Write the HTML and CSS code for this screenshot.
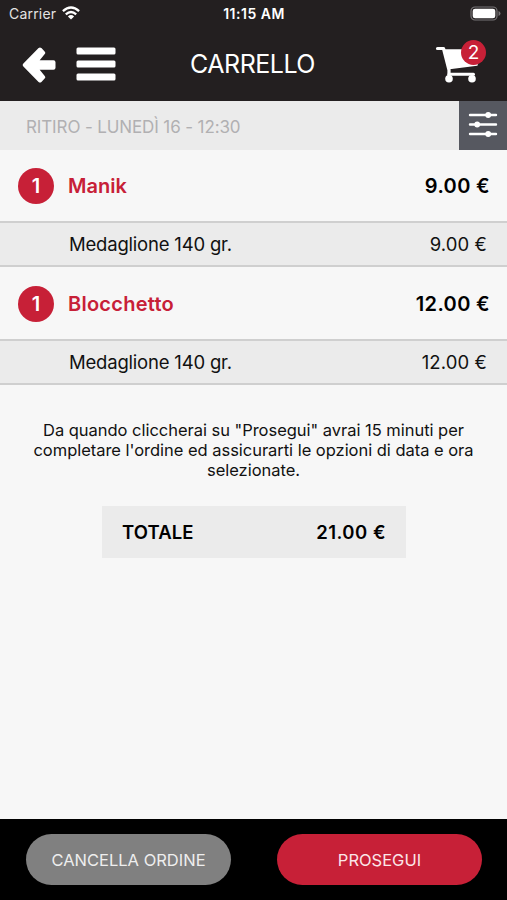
FILE: index.html
```html
<!DOCTYPE html>
<html lang="it">
<head>
<meta charset="utf-8">
<title>Carrello</title>
<link rel="stylesheet" href="styles.css">
</head>
<body>
<div class="app">
  <header class="header">
    <div class="status">
      <div class="carrier"><span>Carrier</span>
        <svg class="wifi" width="18" height="14" viewBox="0 0 18 14" fill="none" stroke="#fff" stroke-width="2.3"><path d="M.9 5.2Q9-2.2 17.1 5.2M3.8 8.3Q9 3.6 14.2 8.3"/><path d="M9 13.6 5.9 10.4Q9 7.8 12.1 10.4Z" fill="#fff" stroke="none"/></svg>
      </div>
      <span class="clock">11:15 AM</span>
      <svg class="battery" width="31" height="15" viewBox="0 0 31 15"><rect x="1" y="1" width="26" height="13" rx="4" fill="none" stroke="#777476" stroke-width="1.2"/><rect x="2.7" y="2.7" width="22.6" height="9.6" rx="2.4" fill="#fff"/><path d="M28.5 5v5q2-.8 2-2.5t-2-2.5Z" fill="#777476"/></svg>
    </div>
    <div class="nav">
      <div class="nav-left">
        <svg class="back" width="34" height="36" viewBox="0 0 34 36" fill="#fff" stroke="#fff" stroke-width="4" stroke-linejoin="round"><path d="M2.800 18 18 2.500 21.200 5.800 13.500 15.300H31.500V20.700H13.500L21.200 30.200 18 33.500Z"/></svg>
        <svg width="40" height="34" viewBox="0 0 40 34" fill="#fff"><rect x=".5" y=".5" width="39" height="7" rx="1.500"/><rect x=".5" y="13.500" width="39" height="7" rx="1.500"/><rect x=".5" y="26.500" width="39" height="7" rx="1.500"/></svg>
      </div>
      <h1 class="title">CARRELLO</h1>
      <div class="cart">
        <svg width="46" height="38" viewBox="0 0 46 38" fill="none" stroke="#fff" stroke-linecap="round" stroke-linejoin="round"><path d="M2.500 3.500H8.500L14 25V30" stroke-width="3.200"/><path d="M9.500 5H42V20L14.500 23.500Z" fill="#fff" stroke-width="1.500"/><path d="M14 29.300H38.500" stroke-width="3"/><circle cx="14" cy="33.700" r="3.800" fill="#fff" stroke="none"/><circle cx="37" cy="33.700" r="3.800" fill="#fff" stroke="none"/></svg>
        <span class="badge">2</span>
      </div>
    </div>
  </header>
  <div class="slot">
    <span class="slot-text">RITIRO - LUNEDÌ 16 - 12:30</span>
    <div class="filter"><svg width="30" height="26" viewBox="0 0 30 26" fill="#fff" stroke="#fff" stroke-width="2.400" stroke-linecap="round"><path d="M2 4H28M2 13.500H28M2 23H28"/><circle cx="20.200" cy="4" r="1.700"/><circle cx="9.200" cy="13.500" r="1.700"/><circle cx="20.200" cy="23" r="1.700"/></svg></div>
  </div>
  <main class="content">
    <div class="item"><span class="qty">1</span><span class="name name-short">Manik</span><span class="price">9.00 €</span></div>
    <div class="extra"><span class="extra-name">Medaglione 140 gr.</span><span class="extra-price">9.00 €</span></div>
    <div class="item item-next"><span class="qty">1</span><span class="name">Blocchetto</span><span class="price">12.00 €</span></div>
    <div class="extra"><span class="extra-name">Medaglione 140 gr.</span><span class="extra-price">12.00 €</span></div>
    <p class="note"><span>Da quando cliccherai su "Prosegui" avrai 15 minuti per</span><br><span>completare l'ordine ed assicurarti le opzioni di data e ora</span><br><span>selezionate.</span></p>
    <div class="total"><span class="total-label">TOTALE</span><span class="total-price">21.00 €</span></div>
  </main>
  <footer class="footer">
    <button class="btn cancel"><span>CANCELLA ORDINE</span></button>
    <button class="btn go"><span>PROSEGUI</span></button>
  </footer>
</div>
</body>
</html>
```
FILE: styles.css
```css
* { box-sizing: border-box; }
body { margin: 0; font-family: Inter, "Liberation Sans", sans-serif; color: #111; }
.app { width: 507px; height: 900px; display: flex; flex-direction: column; background: #f7f7f7; overflow: hidden; white-space: nowrap; }
.header { height: 101px; flex: none; background: #231f20; color: #fff; }
.status { height: 27px; display: grid; grid-template-columns: 1fr auto 1fr; align-items: center; padding: 0 6px 0 9px; }
.carrier { display: flex; align-items: center; gap: 6px; font-size: 14px; letter-spacing: .2px; color: #e4e3e3; }
.wifi { margin-top: -1px; }
.clock { font-size: 14px; font-weight: 600; letter-spacing: .5px; margin-left: -2px; }
.battery { justify-self: end; margin-top: -1px; }
.nav { height: 74px; display: grid; grid-template-columns: 1fr auto 1fr; align-items: center; padding: 0 21px 0 22px; }
.nav-left { display: flex; align-items: center; gap: 20px; }
.back { margin-top: 2px; }
.title { margin: 0 3px 0 0; font-size: 25px; font-weight: 400; letter-spacing: -.5px; }
.cart { position: relative; justify-self: end; width: 51px; height: 38px; }
.badge { position: absolute; left: 26px; top: -5px; width: 25px; height: 25px; border-radius: 50%; background: #c72037; font-size: 19px; line-height: 25px; text-align: center; }
.slot { height: 49px; flex: none; display: flex; align-items: center; justify-content: space-between; background: #ebebeb; color: #b1b0b2; padding-left: 26px; }
.slot-text { font-size: 17px; padding-top: 2px; letter-spacing: -.12px; }
.filter { width: 48px; height: 49px; display: grid; place-items: center; padding-bottom: 4px; background: #565860; }
.content { flex: 1; }
.item { height: 71px; display: flex; align-items: center; padding: 0 17px 0 18px; font-size: 20px; font-weight: 600; color: #000; }
.item-next { height: 72px; padding-top: 1px; }
.qty { width: 36px; height: 36px; border-radius: 50%; background: #c72037; color: #fff; text-align: center; line-height: 36px; margin-right: 14px; }
.name { color: #c72037; letter-spacing: .25px; }
.name-short { letter-spacing: 0; }
.price { margin-left: auto; letter-spacing: .35px; }
.extra { height: 46px; display: flex; align-items: center; justify-content: space-between; padding: 0 20px 0 69px; background: #ebebeb; border-top: 2px solid #cfcfcf; border-bottom: 2px solid #cfcfcf; font-size: 18.500px; }
.extra-name { letter-spacing: -.2px; }
.extra-price { letter-spacing: .1px; }
.note { margin: 35px 0 0; text-align: center; font-size: 16.500px; line-height: 20px; letter-spacing: -.03px; }
.total { width: 304px; height: 52px; margin: 26px 0 0 102px; padding: 0 20px; display: flex; align-items: center; justify-content: space-between; background: #ebebeb; font-size: 18.500px; font-weight: 600; color: #000; }
.total-label { letter-spacing: .1px; }
.total-price { letter-spacing: .5px; }
.footer { height: 81px; flex: none; background: #000; display: flex; justify-content: space-between; padding: 15px 25px 0 26px; }
.btn { width: 205px; height: 51px; border: 0; border-radius: 26px; color: #fff; font: 400 16.500px Inter, "Liberation Sans", sans-serif; padding: 0; }
.cancel { background: #808080; color: #eee; }
.go { background: #c72037; color: #fbe6e9; }
```
